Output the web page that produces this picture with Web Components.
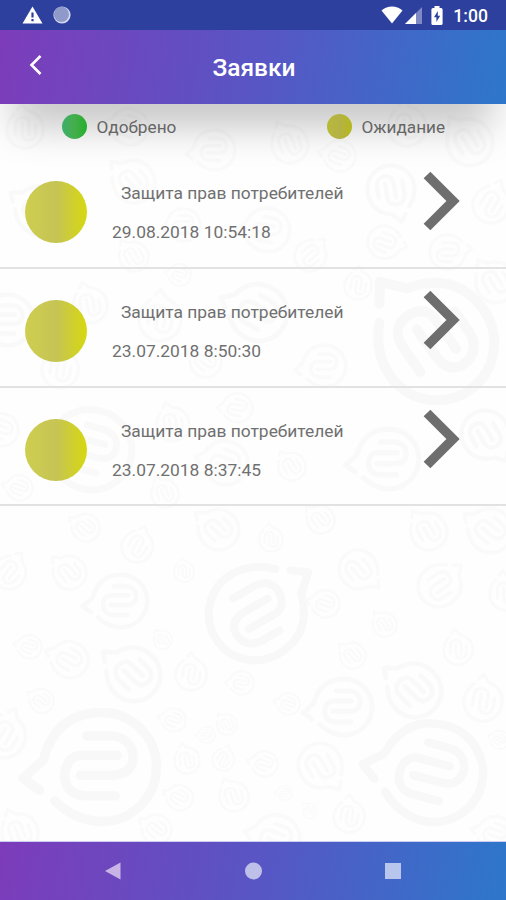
<!DOCTYPE html>
<html lang="ru">
<head>
<meta charset="utf-8">
<title>Заявки</title>
<style>
    body {
        margin: 0;
        font-family: Roboto, "Noto Sans", sans-serif;
    }
</style>
</head>
<body>
<requests-app></requests-app>

<script>
class StatusBar extends HTMLElement {
    connectedCallback() {
        this.attachShadow({ mode: 'open' });
        this.shadowRoot.innerHTML = `
            <style>
                :host {
                    display: flex;
                    justify-content: space-between;
                    align-items: center;
                    box-sizing: border-box;
                    height: 30px;
                    padding: 0 18px 0 22px;
                    background: #2e409d;
                    color: #fff;
                }
                svg { display: block; }
                .group { display: flex; align-items: center; }
                .left { gap: 10px; }
                .wifi { margin-right: 2px; }
                .cell { margin-right: 9px; }
                .battery { margin-right: 10px; }
                .time {
                    font-size: 17.6px;
                    font-weight: 500;
                    line-height: 30px;
                    padding-top: 2px;
                }
            </style>
            <div class="group left">
                <svg width="21" height="18" viewBox="0 0 21 18">
                    <path d="M10.5 0.5L20.5 17.5H0.5Z" fill="#fff"/>
                    <path d="M9.4 6.5h2.2v5H9.4zM9.4 13h2.2v2.2H9.4z" fill="#2e409d"/>
                </svg>
                <svg width="19" height="18" viewBox="0 0 19 18">
                    <circle cx="9" cy="9" r="8.6" fill="#d3d9f0"/>
                    <circle cx="8.4" cy="8.4" r="7.6" fill="#8f9acb"/>
                </svg>
            </div>
            <div class="group">
                <svg class="wifi" width="22" height="18" viewBox="0 0 22 18">
                    <path d="M0.5 4.4C6.5-0.8 15.5-0.8 21.5 4.4L11 17.6Z" fill="#fff"/>
                </svg>
                <svg class="cell" width="17" height="17" viewBox="0 0 17 17">
                    <path d="M17 0V17H0Z" fill="#7f8ac4"/>
                    <path d="M11 6V17H0Z" fill="#fff"/>
                </svg>
                <svg class="battery" width="12" height="19" viewBox="0 0 12 19">
                    <path d="M3.5 0h5v2H10a1.6 1.6 0 0 1 1.6 1.6v13.8A1.6 1.6 0 0 1 10 19H2A1.6 1.6 0 0 1 .4 17.4V3.6A1.6 1.6 0 0 1 2 2h1.5z" fill="#fff"/>
                    <path d="M6.8 5L3 11.3h2.4V16L9.2 9.7H6.8z" fill="#2e409d"/>
                </svg>
                <span class="time"><slot></slot></span>
            </div>
        `;
    }
}

class AppHeader extends HTMLElement {
    connectedCallback() {
        this.attachShadow({ mode: 'open' });
        this.shadowRoot.innerHTML = `
            <style>
                :host {
                    display: grid;
                    grid-template-columns: 72px 1fr 72px;
                    align-items: center;
                    height: 74px;
                    background: linear-gradient(100deg, #7d3cba 0%, #5955c4 50%, #2d77cb 100%);
                    box-shadow: 0 34px 40px -14px rgba(0, 0, 0, 0.25);
                    color: #fff;
                }
                svg { display: block; margin: -4px 0 0 28px; }
                h1 {
                    margin: 2px 0 0 2px;
                    font-size: 24.5px;
                    font-weight: 500;
                    line-height: 30px;
                    text-align: center;
                }
            </style>
            <svg width="15" height="22" viewBox="0 0 15 22">
                <path d="M12.5 2L3.5 11L12.5 20" fill="none" stroke="#fff" stroke-width="2.6"/>
            </svg>
            <h1><slot></slot></h1>
        `;
    }
}

class StatusLegend extends HTMLElement {
    connectedCallback() {
        this.attachShadow({ mode: 'open' });
        this.shadowRoot.innerHTML = `
            <style>
                :host {
                    display: flex;
                    align-items: center;
                    gap: 9.5px;
                    font-size: 17.2px;
                    line-height: 24px;
                    color: #666;
                }
                i {
                    width: 25px;
                    height: 25px;
                    border-radius: 50%;
                    background: linear-gradient(90deg, #3dae6c, #45ae4b 50%, #23b02b);
                }
                :host([type="pending"]) i {
                    background: linear-gradient(90deg, #b8b83a, #b5b245 50%, #b5b81c);
                }
            </style>
            <i></i><span><slot></slot></span>
        `;
    }
}

class RequestItem extends HTMLElement {
    connectedCallback() {
        this.attachShadow({ mode: 'open' });
        this.shadowRoot.innerHTML = `
            <style>
                :host {
                    display: flex;
                    box-sizing: border-box;
                    height: 118.6px;
                    padding: 0 46px 0 25px;
                    border-bottom: 2px solid #e2e2e2;
                    color: #707070;
                    font-size: 17.4px;
                    line-height: 24px;
                }
                .status {
                    width: 62px;
                    height: 62px;
                    margin-top: 31px;
                    border-radius: 50%;
                    background: linear-gradient(90deg, #cece50, #c6c455 50%, #d6d80f);
                }
                .info {
                    flex: 1;
                    margin: 31px 0 0 25px;
                }
                .name { padding-left: 9px; white-space: nowrap; }
                .date { margin-top: 15px; }
                svg { display: block; margin-top: 21px; }
            </style>
            <div class="status"></div>
            <div class="info">
                <div class="name"><slot></slot></div>
                <div class="date"><slot name="date"></slot></div>
            </div>
            <svg width="37" height="60" viewBox="0 0 37 60">
                <path d="M4 4L30 30L4 56" fill="none" stroke="#6e6e6e" stroke-width="9.5"/>
            </svg>
        `;
    }
}

class NavButtons extends HTMLElement {
    connectedCallback() {
        this.attachShadow({ mode: 'open' });
        this.shadowRoot.innerHTML = `
            <style>
                :host {
                    display: flex;
                    justify-content: center;
                    align-items: center;
                    gap: 123.5px;
                    height: 58px;
                    background: linear-gradient(100deg, #7d3cba 0%, #5955c4 50%, #2d77cb 100%);
                    box-shadow: 0 -1px #cfd0ef;
                }
                svg { display: block; fill: #bfc0ea; }
            </style>
            <svg width="16" height="18" viewBox="0 0 16 18"><path d="M0 9L15.5 0.5V17.5Z" fill="#c9b5e5"/></svg>
            <svg width="17" height="18" viewBox="0 0 17 18"><circle cx="8.5" cy="9" r="8.5"/></svg>
            <svg width="16" height="18" viewBox="0 0 16 18"><path d="M0 1H16V17H0Z" fill="#b8c6ed"/></svg>
        `;
    }
}

// x, y, radius, rotation
const BUBBLES = [
    [102, 767, 60, 0], [434, 773, 54, 15], [255, 614, 51, 150], [437, 343, 63, 55],
    [92, 450, 44, 15], [344, 707, 31, 0], [415, 691, 29, 45], [134, 675, 29, 45],
    [121, 601, 29, 0], [320, 765, 24, 240], [70, 660, 20, 30], [191, 675, 17, 100],
    [70, 573, 18, 50], [137, 547, 17, 120], [9, 573, 18, 130], [219, 530, 22, 45],
    [4, 737, 23, 120], [234, 797, 16, 70], [174, 720, 13, 20], [187, 761, 14, 80],
    [42, 701, 13, 40], [483, 702, 21, 100], [265, 764, 14, 20], [349, 817, 17, 100],
    [277, 838, 25, 20], [496, 834, 19, 20], [20, 833, 20, 70], [157, 830, 16, 40],
    [242, 683, 13, 10], [353, 656, 14, 50], [458, 650, 16, 90], [358, 569, 21, 230],
    [439, 586, 23, 145], [491, 531, 24, 40], [429, 532, 20, 60], [321, 520, 15, 50],
    [271, 540, 13, 90], [326, 604, 15, 20], [506, 594, 18, 90], [389, 459, 33, 0],
    [485, 434, 26, 240], [292, 467, 15, 60], [226, 463, 24, 20], [173, 425, 18, 80],
    [238, 408, 16, 10], [86, 528, 15, 40], [184, 572, 11, 90], [165, 494, 15, 70],
    [20, 488, 14, 20], [325, 366, 23, 0], [259, 313, 31, 30], [358, 286, 15, 100],
    [310, 256, 17, 140], [384, 242, 18, 200], [447, 252, 19, 180], [391, 189, 26, 260],
    [491, 205, 20, 120], [268, 230, 24, 10], [134, 182, 23, 50], [184, 225, 18, 0],
    [40, 211, 26, 40], [134, 257, 16, 60], [496, 283, 22, 60], [8, 320, 28, 0],
    [90, 306, 19, 80], [160, 320, 23, 100], [206, 362, 17, 40], [60, 370, 20, 100],
    [2, 430, 18, 20], [180, 275, 12, 20], [340, 156, 17, 20], [470, 143, 25, 60],
    [290, 145, 20, 70], [215, 150, 22, 0], [25, 130, 20, 90], [130, 127, 20, 20],
    [407, 127, 21, 90], [30, 647, 13, 20], [385, 625, 13, 60], [163, 640, 10, 60],
    [289, 704, 12, 20], [227, 725, 11, 60], [207, 735, 9, 10], [223, 760, 12, 120],
    [180, 798, 14, 30], [285, 793, 8, 10], [310, 811, 8, 60], [500, 740, 10, 30]
];

class BubbleWallpaper extends HTMLElement {
    connectedCallback() {
        this.attachShadow({ mode: 'open' });
        // small bubbles are fainter than the big ones
        const marks = BUBBLES.map(([x, y, r, a]) =>
            `<use href="#bubble" opacity="${r > 45 ? 0.9 : r > 25 ? 0.7 : 0.5}" transform="translate(${x} ${y}) rotate(${a}) scale(${r / 108})"/>`
        ).join('');
        this.shadowRoot.innerHTML = `
            <style>
                :host {
                    position: absolute;
                    inset: 0;
                    z-index: -1;
                    background: #fefefe;
                }
                svg { display: block; }
            </style>
            <svg width="506" height="900" viewBox="0 0 506 900" fill="none" stroke="#f8f8f8" stroke-width="17" stroke-linecap="round" stroke-linejoin="round">
                <defs>
                    <g id="bubble">
                        <path d="M-85 61C-60 85-30 98 0 98A98 98 0 0 0 0-98C-60-98-92-65-106-12L-142 20L-112 42"/>
                        <path d="M-27-56H15C40-56 56-40 56-18C56 5 40 15 15 15H-39"/>
                        <path d="M27-21H-36C-56-21-67-5-67 15C-67 40-50 52-27 52H24"/>
                    </g>
                </defs>
                ${marks}
            </svg>
        `;
    }
}

class RequestsApp extends HTMLElement {
    connectedCallback() {
        this.attachShadow({ mode: 'open' });
        this.shadowRoot.innerHTML = `
            <style>
                :host {
                    display: flex;
                    flex-direction: column;
                    position: relative;
                    z-index: 0;
                    width: 506px;
                    height: 900px;
                    overflow: hidden;
                }
                .legend {
                    display: grid;
                    grid-template-columns: 265px 1fr;
                    align-items: start;
                    box-sizing: border-box;
                    padding: 10px 0 0 62px;
                    height: 46.4px;
                }
                main { flex: 1; }
            </style>
            <bubble-wallpaper></bubble-wallpaper>
            <status-bar>1:00</status-bar>
            <app-header>Заявки</app-header>
            <div class="legend">
                <status-legend type="approved">Одобрено</status-legend>
                <status-legend type="pending">Ожидание</status-legend>
            </div>
            <main>
                <request-item>Защита прав потребителей<span slot="date">29.08.2018 10:54:18</span></request-item>
                <request-item>Защита прав потребителей<span slot="date">23.07.2018 8:50:30</span></request-item>
                <request-item>Защита прав потребителей<span slot="date">23.07.2018 8:37:45</span></request-item>
            </main>
            <nav-buttons></nav-buttons>
        `;
    }
}

customElements.define('status-bar', StatusBar);
customElements.define('app-header', AppHeader);
customElements.define('status-legend', StatusLegend);
customElements.define('request-item', RequestItem);
customElements.define('nav-buttons', NavButtons);
customElements.define('bubble-wallpaper', BubbleWallpaper);
customElements.define('requests-app', RequestsApp);
</script>
</body>
</html>
